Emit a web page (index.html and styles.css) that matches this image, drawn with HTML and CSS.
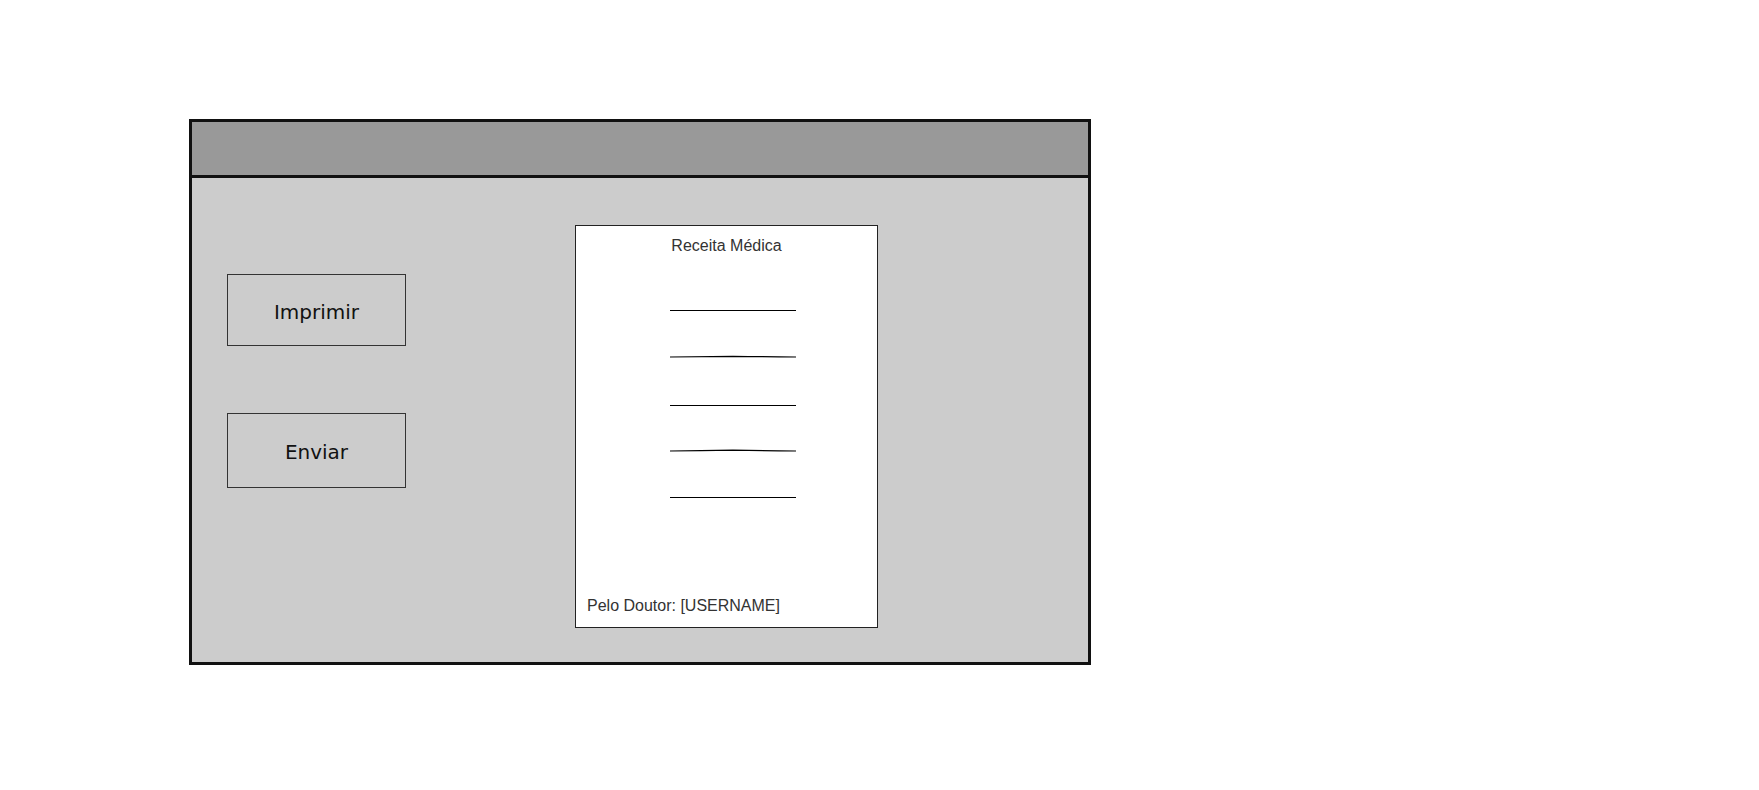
FILE: index.html
```html
<!DOCTYPE html>
<html lang="pt">
<head>
<meta charset="utf-8">
<title>Receita Médica</title>
<link rel="stylesheet" href="styles.css">
</head>
<body>
<div class="window">
  <div class="titlebar"></div>
  <div class="content">
    <div class="actions">
      <div class="btn btn-print">Imprimir</div>
      <div class="btn btn-send">Enviar</div>
    </div>
    <div class="paper">
      <div class="paper-title">Receita Médica</div>
      <div class="rules">
        <svg class="rule" viewBox="0 0 126 4"><path d="M0 1.5 L126 1.5"/></svg>
        <svg class="rule" viewBox="0 0 126 4"><path d="M0 2 Q30 1.8 63 1.3 Q95 1.8 126 2"/></svg>
        <svg class="rule" viewBox="0 0 126 4"><path d="M0 1.5 L126 1.5"/></svg>
        <svg class="rule" viewBox="0 0 126 4"><path d="M0 2 Q30 1.8 63 1.2 Q95 1.8 126 2"/></svg>
        <svg class="rule" viewBox="0 0 126 4"><path d="M0 1.5 L126 1.5"/></svg>
      </div>
      <div class="signature">Pelo Doutor: [USERNAME]</div>
    </div>
  </div>
</div>
</body>
</html>
```

FILE: styles.css
```css
html, body {
  margin: 0;
  padding: 0;
  background: #ffffff;
}

body {
  font-family: "Liberation Sans", Arial, sans-serif;
  padding-top: 119px;
  padding-left: 189px;
}

.window {
  box-sizing: border-box;
  width: 902px;
  height: 546px;
  border: 3px solid #111111;
  background: #cccccc;
  display: flex;
  flex-direction: column;
}

.titlebar {
  height: 53px;
  background: #999999;
  border-bottom: 3px solid #111111;
  flex: none;
}

.content {
  display: flex;
  align-items: flex-start;
  padding: 47px 0 0 35px;
}

.actions {
  display: flex;
  flex-direction: column;
  width: 179px;
  margin-top: 49px;
  gap: 67px;
}

.btn {
  box-sizing: border-box;
  display: flex;
  align-items: center;
  justify-content: center;
  padding-top: 3px;
  border: 1px solid #333333;
  background: #cccccc;
  color: #111111;
  font-family: "Comic Sans MS", "DejaVu Sans", sans-serif;
  font-size: 20px;
}

.btn-print {
  height: 72px;
}

.btn-send {
  height: 75px;
}

.paper {
  box-sizing: border-box;
  width: 303px;
  height: 403px;
  margin-left: 169px;
  background: #ffffff;
  border: 1px solid #222222;
  display: flex;
  flex-direction: column;
  color: #333333;
  font-size: 16px;
  line-height: 18px;
}

.paper-title {
  padding-top: 11px;
  text-align: center;
}

.rules {
  margin: 54px 0 0 94px;
  display: flex;
  flex-direction: column;
}

.rule {
  display: block;
  width: 126px;
  height: 4px;
  fill: none;
  stroke: #000000;
  stroke-width: 1.2;
}

.rule:nth-child(2) { margin-top: 42px; }
.rule:nth-child(3) { margin-top: 45px; }
.rule:nth-child(4) { margin-top: 41px; }
.rule:nth-child(5) { margin-top: 43px; }

.signature {
  margin-top: auto;
  padding: 0 0 12px 11px;
}
```
